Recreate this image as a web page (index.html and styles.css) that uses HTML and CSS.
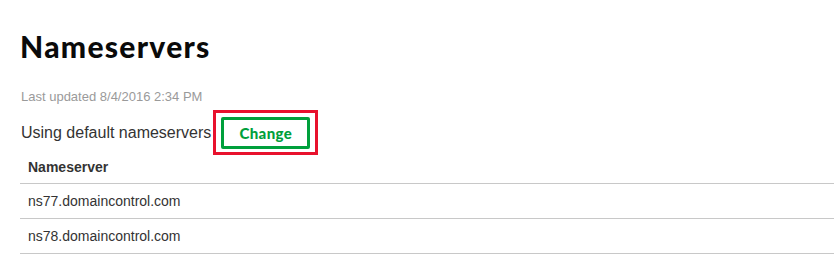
FILE: index.html
```html
<!DOCTYPE html>
<html lang="en">
<head>
<meta charset="utf-8">
<title>Nameservers</title>
<link rel="stylesheet" href="styles.css">
</head>
<body>
<main class="page">
  <h1 class="title">Nameservers</h1>
  <p class="updated">Last updated 8/4/2016 2:34 PM</p>
  <div class="status">
    <span class="status-text">Using default nameservers</span>
    <span class="highlight"><button class="change" type="button">Change</button></span>
  </div>
  <table class="ns">
    <thead>
      <tr><th>Nameserver</th></tr>
    </thead>
    <tbody>
      <tr><td>ns77.domaincontrol.com</td></tr>
      <tr><td>ns78.domaincontrol.com</td></tr>
    </tbody>
  </table>
</main>
</body>
</html>
```

FILE: styles.css
```css
html, body {
  margin: 0;
  padding: 0;
  background: #fff;
}
body {
  font-family: "Liberation Sans", Arial, sans-serif;
  color: #333;
}
.page {
  padding: 28px 0 0 20px;
}
.title {
  font-family: Lato, "Liberation Sans", sans-serif;
  font-weight: 900;
  font-size: 30px;
  line-height: 36px;
  margin: 0;
  color: #0a0a0a;
  letter-spacing: 1.3px;
}
.updated {
  margin: 25px 0 0 1px;
  font-size: 13px;
  line-height: 16px;
  color: #9a9a9a;
}
.status {
  display: flex;
  align-items: center;
  margin-top: 5px;
  margin-left: 1px;
}
.status-text {
  font-size: 16px;
  color: #333;
}
.highlight {
  display: inline-flex;
  border: 3px solid #e8112d;
  padding: 4px 5px 3px 5px;
  margin-left: 2px;
}
.change {
  font-family: Lato, "Liberation Sans", sans-serif;
  font-weight: 900;
  font-size: 15px;
  letter-spacing: 0.4px;
  color: #00a03c;
  background: #fff;
  border: 3px solid #00a03c;
  border-radius: 2px;
  width: 89px;
  height: 32px;
  padding: 0;
}
.ns {
  width: 100%;
  border-collapse: collapse;
  font-size: 14px;
  color: #333;
}
.ns th {
  text-align: left;
  font-weight: bold;
  padding: 4px 8px 8px 8px;
  line-height: 16px;
  border-bottom: 1px solid #c8c8c8;
}
.ns td {
  padding: 0 8px;
  height: 34px;
  line-height: 16px;
  border-bottom: 1px solid #c8c8c8;
}
```
